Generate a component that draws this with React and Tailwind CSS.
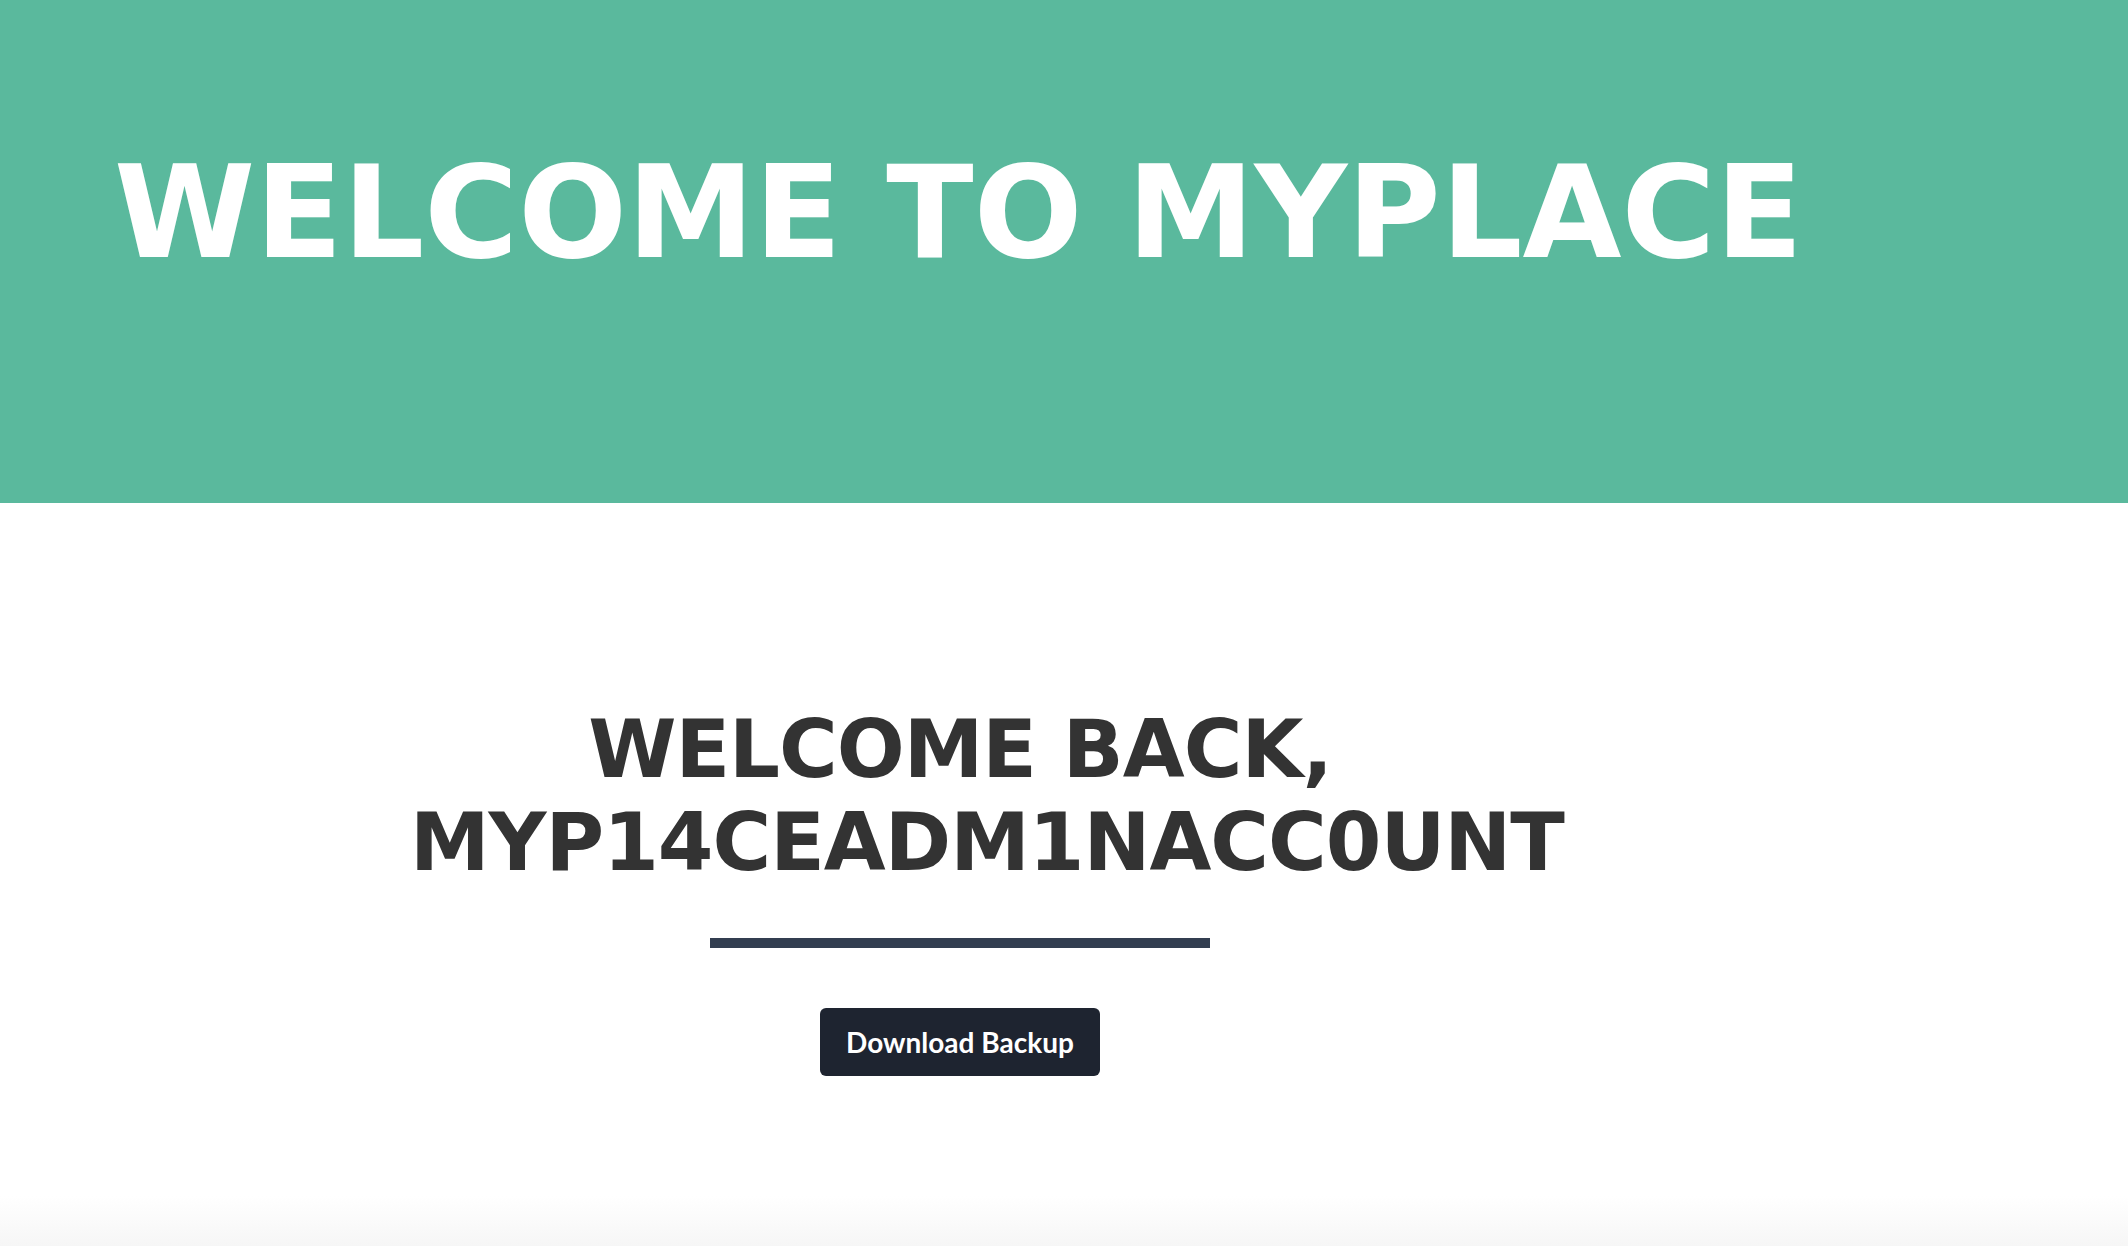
export default function App() {
  return (
    <div className="min-h-[1246px] flex flex-col bg-white">
      <header className="h-[503px] bg-[#5ab99d] pl-[114px] pt-[149px]">
        <h1 className="text-[128px] leading-none font-bold text-white whitespace-nowrap font-['DejaVu_Sans',sans-serif]">
          WELCOME TO MYPLACE
        </h1>
      </header>

      <main className="flex-1 flex flex-col">
        <div className="w-[1920px] flex flex-col items-center pt-[200px]">
          <h2 className="w-[1100px] text-center text-[80px] leading-[93px] tracking-[-1px] font-bold text-[#333333] font-['DejaVu_Sans',sans-serif]">
            WELCOME BACK, MYP14CEADM1NACC0UNT
          </h2>
          <div className="mt-[49px] w-[500px] h-[10px] bg-[#323e50]" />
          <button className="mt-[60px] w-[280px] h-[68px] rounded-md bg-[#1e2430] text-white text-[28px] font-bold font-['Lato',sans-serif]">
            Download Backup
          </button>
        </div>
        <div className="mt-auto h-[50px] bg-gradient-to-b from-white to-[#f6f6f6]" />
      </main>
    </div>
  );
}
